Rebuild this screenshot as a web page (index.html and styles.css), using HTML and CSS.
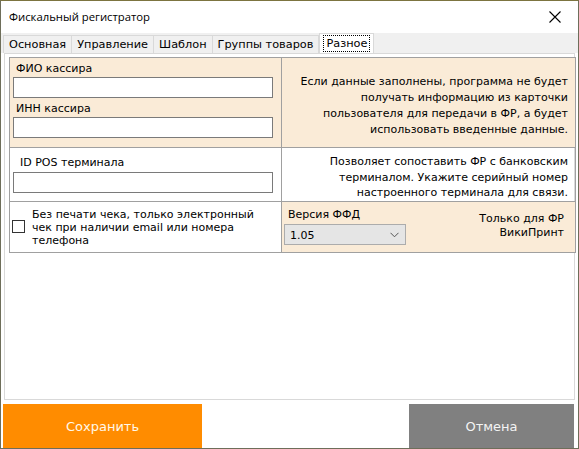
FILE: index.html
```html
<!DOCTYPE html>
<html lang="ru">
<head>
<meta charset="utf-8">
<link rel="stylesheet" href="styles.css">
</head>
<body>
<div class="window">
  <div class="titlebar">
    <span class="title">Фискальный регистратор</span>
    <svg class="close" width="12" height="12" viewBox="0 0 12 12"><path d="M0.5 0.5L11.5 11.5M11.5 0.5L0.5 11.5" stroke="#000" stroke-width="1.1" fill="none"/></svg>
  </div>
  <div class="tabs">
    <div class="tab">Основная</div>
    <div class="tab">Управление</div>
    <div class="tab">Шаблон</div>
    <div class="tab">Группы товаров</div>
    <div class="tab active"><span class="focus">Разное</span></div>
  </div>
  <div class="panel">
    <table class="grid">
      <tr class="r1">
        <td class="cell beige left">
          <div class="label">ФИО кассира</div>
          <div class="input"></div>
          <div class="label l2">ИНН кассира</div>
          <div class="input"></div>
        </td>
        <td class="cell beige note">Если данные заполнены, программа не будет получать информацию из карточки пользователя для передачи в ФР, а будет использовать введенные данные.</td>
      </tr>
      <tr class="r2">
        <td class="cell left">
          <div class="label pos">ID POS терминала</div>
          <div class="input"></div>
        </td>
        <td class="cell note n2">Позволяет сопоставить ФР с банковским терминалом. Укажите серийный номер настроенного терминала для связи.</td>
      </tr>
      <tr class="r3">
        <td class="cell left">
          <div class="check">
            <span class="box"></span>
            <span class="checktext">Без печати чека, только электронный чек при наличии email или номера телефона</span>
          </div>
        </td>
        <td class="cell beige ffd">
          <div class="ffdrow">
            <div class="ffdleft">
              <div class="label ffdlabel">Версия ФФД</div>
              <div class="select"><span>1.05</span>
                <svg width="9" height="6" viewBox="0 0 9 6"><path d="M0.5 0.8L4.5 4.8L8.5 0.8" stroke="#555" fill="none"/></svg>
              </div>
            </div>
            <div class="only">Только для ФР<br>ВикиПринт</div>
          </div>
        </td>
      </tr>
    </table>
  </div>
  <div class="buttons">
    <button class="btn save">Сохранить</button>
    <button class="btn cancel">Отмена</button>
  </div>
</div>
</body>
</html>
```
FILE: styles.css
```css
html, body {
  margin: 0;
  padding: 0;
}
body {
  width: 579px;
  height: 449px;
  overflow: hidden;
  background: #ffffff;
  font-family: "DejaVu Sans", Verdana, sans-serif;
  font-size: 11px;
  color: #000;
}
.window {
  box-sizing: border-box;
  width: 579px;
  height: 449px;
  border: 1px solid #6e6e5a;
  border-top-color: #7c7440;
  background: #fff;
  display: flex;
  flex-direction: column;
}
.titlebar {
  height: 32px;
  display: flex;
  align-items: center;
  justify-content: space-between;
  padding: 0 17px 0 8px;
  background: #fff;
}
.title {
  font-family: "Open Sans", "Noto Sans", sans-serif;
  font-size: 11.3px;
  position: relative;
  top: -1px;
}
.close {
  display: block;
}
.tabs {
  height: 19px;
  background: #f0f0f0;
  display: flex;
  padding: 1px 0 0 2px;
  align-items: flex-end;
}
.tab {
  height: 17px;
  padding: 0 5px;
  line-height: 17px;
  border: 1px solid #d9d9d9;
  border-bottom: none;
  margin-right: -1px;
  background: #f0f0f0;
  font-size: 11.3px;
}
.tab.active {
  background: #fff;
  height: 19px;
  line-height: 19px;
  margin-left: 1px;
  padding: 0 4px;
}
.focus {
  outline: 1px dotted #000;
  padding: 1px 2px;
}
.panel {
  margin: 0 3px;
  border: 1px solid #d9d9d9;
  background: #fff;
  height: 342px;
  padding: 3px 0 0 4px;
}
.grid {
  border-collapse: collapse;
  width: 567px;
}
.cell {
  border: 1px solid #a0a0a0;
  padding: 0;
  vertical-align: top;
}
.beige {
  background: #faebd7;
}
.left {
  width: 260px;
  padding: 3px 8px 9px 3px;
}
.r1 .left { height: 76px; }
.label {
  padding-left: 3px;
  height: 16px;
  line-height: 16px;
}
.l2 { margin-top: 3px; }
.label.pos {
  padding-left: 7px;
  margin-top: 4px;
  margin-bottom: 1px;
}
.input {
  box-sizing: border-box;
  height: 21px;
  border: 1px solid #7a7a7a;
  background: #fff;
  width: 260px;
}
.r2 .left { height: 42px; padding-bottom: 8px; }
.note {
  text-align: right;
  vertical-align: middle;
  padding: 7px 7px 0 6px;
  line-height: 16px;
}
.note.n2 {
  line-height: 15.5px;
  vertical-align: top;
  padding-top: 6px;
}
.r3 .left {
  vertical-align: middle;
  height: 49px;
  padding: 0 4px 1px 2px;
}
.check {
  display: flex;
  align-items: center;
}
.box {
  box-sizing: border-box;
  width: 13px;
  height: 13px;
  border: 1px solid #333;
  background: #fff;
  flex: none;
  margin-right: 7px;
}
.checktext {
  line-height: 13px;
  margin-top: 1px;
  max-width: 236px;
}
.ffd {
  vertical-align: top;
}
.ffdrow {
  display: flex;
  justify-content: space-between;
  padding: 5px 11px 0 2px;
}
.ffdlabel {
  padding-left: 4px;
  margin-bottom: 1px;
}
.select {
  box-sizing: border-box;
  width: 122px;
  height: 21px;
  background: #e5e5e5;
  border: 1px solid #acacac;
  display: flex;
  align-items: center;
  justify-content: space-between;
  padding: 0 6px 0 5px;
}
.select span { padding-top: 2px; }
.only {
  text-align: right;
  line-height: 14px;
  padding-top: 5px;
}
.buttons {
  display: flex;
  justify-content: space-between;
  padding: 4px 4px 0 2px;
}
.btn {
  border: none;
  height: 44px;
  font-family: "DejaVu Sans", Verdana, sans-serif;
  font-size: 13px;
  color: #fff8ea;
  padding: 0;
}
.save {
  width: 199px;
  background: #ff8c00;
}
.cancel {
  width: 165px;
  background: #808080;
  color: #f4f4f4;
}
```
